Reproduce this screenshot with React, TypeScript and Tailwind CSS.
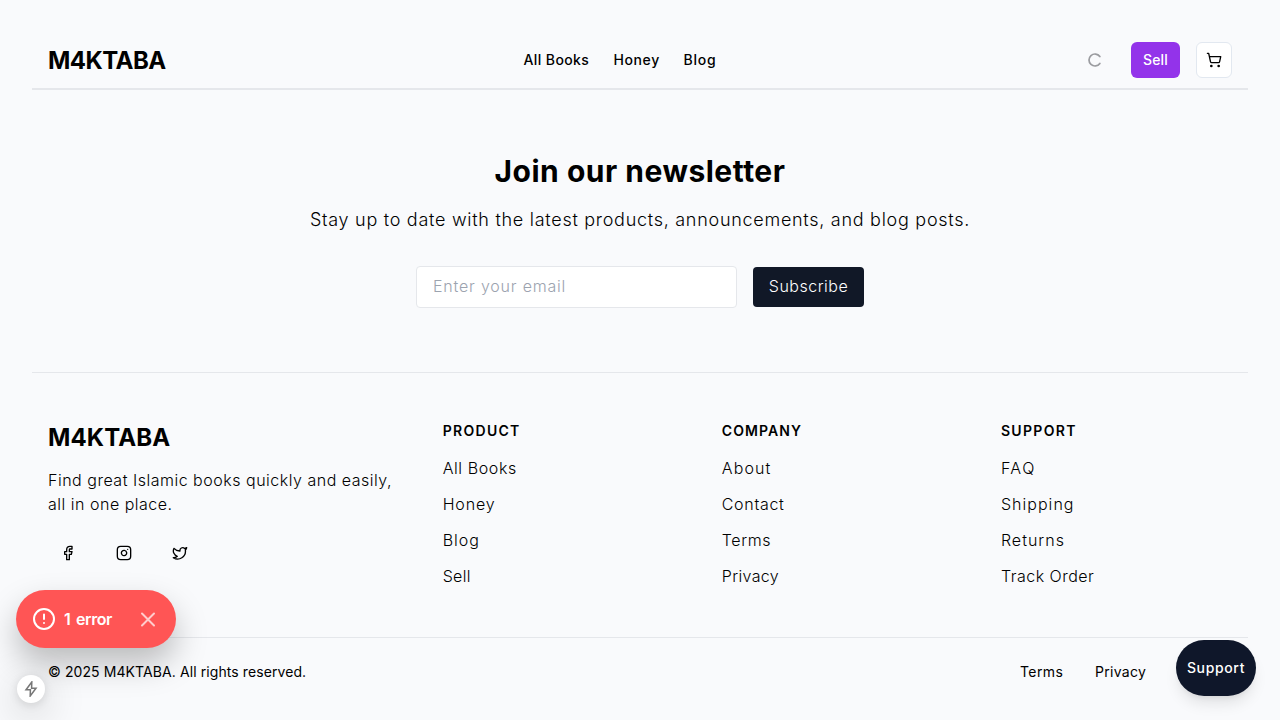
import { Facebook, Instagram, ShoppingCart, Twitter } from "lucide-react";

const columns = [
  {
    title: "Product",
    spacing: "tracking-[1.3px]",
    links: [
      ["All Books", "tracking-[0.59px]"],
      ["Honey", "tracking-[0.83px]"],
      ["Blog", "tracking-[1.02px]"],
      ["Sell", "tracking-[0.35px]"],
    ],
  },
  {
    title: "Company",
    spacing: "tracking-[1.08px]",
    links: [
      ["About", "tracking-[1.13px]"],
      ["Contact", "tracking-[0.7px]"],
      ["Terms", "tracking-[0.6px]"],
      ["Privacy", "tracking-[0.36px]"],
    ],
  },
  {
    title: "Support",
    spacing: "tracking-[1.33px]",
    links: [
      ["FAQ", "tracking-[1.5px]"],
      ["Shipping", "tracking-[1.04px]"],
      ["Returns", "tracking-[1.02px]"],
      ["Track Order", "tracking-[0.5px]"],
    ],
  },
];

function Header() {
  return (
    <header className="flex h-[58px] items-center justify-between border-b-2 border-[#e5e7eb] px-4">
      <div className="w-[117px] pt-0.5 text-2xl font-bold tracking-[-0.55px] whitespace-nowrap">M4KTABA</div>
      <nav className="flex gap-6 text-sm font-medium">
        <a className="w-[66px] tracking-[0.4px] whitespace-nowrap">All Books</a>
        <a className="w-[46px] tracking-[0.6px]">Honey</a>
        <a className="w-[33px] tracking-[0.75px]">Blog</a>
      </nav>
      <div className="flex items-center gap-4">
        <div className="flex h-9 w-10 items-center justify-center">
          <svg
            className="size-4 rotate-[36deg] text-[#9b9ca0]"
            viewBox="0 0 24 24"
            fill="none"
            stroke="currentColor"
            strokeWidth="2.6"
            strokeLinecap="round"
          >
            <path d="M21 12a9 9 0 1 1-6.219-8.56" />
          </svg>
        </div>
        <button className="h-9 w-[49px] rounded-md bg-[#9333ea] text-sm font-medium tracking-[0.2px] text-white">
          Sell
        </button>
        <button className="flex size-9 items-center justify-center rounded-md border border-[#e2e8f0] bg-white">
          <ShoppingCart className="size-4" />
        </button>
      </div>
    </header>
  );
}

function Newsletter() {
  return (
    <section className="flex flex-col items-center pt-[63px] pb-16">
      <h2 className="text-3xl font-bold tracking-[0.5px]">Join our newsletter</h2>
      <p className="mt-[17px] text-lg font-light tracking-[0.72px]">
        Stay up to date with the latest products, announcements, and blog posts.
      </p>
      <div className="mt-8 flex w-md items-center gap-4">
        <input
          className="h-[42px] min-w-0 flex-1 rounded border border-[#e5e7eb] bg-white px-4 pb-0.5 font-light tracking-[0.8px] placeholder:text-[#9ca3af]"
          placeholder="Enter your email"
        />
        <button className="h-10 w-[111px] rounded bg-[#111827] pb-0.5 font-light tracking-[0.5px] text-white">
          Subscribe
        </button>
      </div>
    </section>
  );
}

function Footer() {
  return (
    <footer className="border-t border-[#e5e7eb]">
      <div className="grid grid-cols-[1.5fr_1fr_1fr_1fr] gap-12 px-4 py-12">
        <div>
          <div className="mt-px text-2xl font-bold tracking-[0.1px]">M4KTABA</div>
          <p className="mt-3.5 font-light tracking-[0.51px] whitespace-nowrap">
            Find great Islamic books quickly and easily,
            <br />
            all in one place.
          </p>
          <div className="mt-[17px] flex gap-4">
            <a className="flex size-10 items-center justify-center">
              <Facebook className="size-4" />
            </a>
            <a className="flex size-10 items-center justify-center">
              <Instagram className="size-4" />
            </a>
            <a className="flex size-10 items-center justify-center">
              <Twitter className="size-4" />
            </a>
          </div>
        </div>
        {columns.map((column) => (
          <div key={column.title}>
            <h3 className={"text-sm font-semibold uppercase " + column.spacing}>{column.title}</h3>
            <ul className="mt-[15px] mb-px space-y-3 font-light">
              {column.links.map(([label, spacing]) => (
                <li key={label}>
                  <a className={spacing}>{label}</a>
                </li>
              ))}
            </ul>
          </div>
        ))}
      </div>
      <div className="flex justify-between border-t border-[#e5e7eb] px-4 pt-6 text-sm">
        <p className="tracking-[0.09px]">© 2025 M4KTABA. All rights reserved.</p>
        <div className="flex gap-8 pr-[86px]">
          <a className="w-[43px] tracking-[0.4px]">Terms</a>
          <a className="w-[51px] tracking-[0.3px]">Privacy</a>
        </div>
      </div>
    </footer>
  );
}

function ErrorToast() {
  return (
    <div className="absolute top-[590px] left-4 flex h-[58px] w-40 items-center rounded-full bg-[#ff5555] px-4 text-white shadow-[0_16px_32px_rgba(0,0,0,0.25)]">
      <svg
        className="size-6 shrink-0"
        viewBox="0 0 24 24"
        fill="none"
        stroke="currentColor"
        strokeWidth="2"
        strokeLinecap="round"
      >
        <circle cx="12" cy="12" r="10" />
        <path d="M12 7.5v4.5M12 15.9v.1" />
      </svg>
      <span className="ml-2 font-semibold tracking-[-0.4px] whitespace-nowrap [word-spacing:2px]">1 error</span>
      <svg
        className="ml-auto size-6 shrink-0 text-white/70"
        viewBox="0 0 24 24"
        fill="none"
        stroke="currentColor"
        strokeWidth="2"
        strokeLinecap="round"
      >
        <path d="M6 6.5l12 12M18 6.5l-12 12" />
      </svg>
    </div>
  );
}

export default function App() {
  return (
    <div className="relative h-[720px] overflow-hidden bg-[#f9fafc] px-8 pt-8 font-['Inter',sans-serif] text-black">
      <Header />
      <Newsletter />
      <Footer />
      <button className="absolute right-6 bottom-6 flex h-14 w-20 items-center justify-center rounded-full bg-[#0f172a] text-sm font-medium tracking-[0.65px] text-white shadow-lg">
        Support
      </button>
      <ErrorToast />
      <div className="absolute top-[675px] left-[17px] flex size-7 items-center justify-center rounded-full bg-white shadow-[0_11px_40px_rgba(0,0,0,0.25),0_2px_10px_rgba(0,0,0,0.12)]">
        <svg className="size-4 text-[#777]" viewBox="0 0 16 16" fill="none" stroke="currentColor" strokeWidth="1.5">
          <path d="M8.8 1L3 8.8h4.4L7.2 15 13 7.2H8.6z" />
        </svg>
      </div>
    </div>
  );
}
